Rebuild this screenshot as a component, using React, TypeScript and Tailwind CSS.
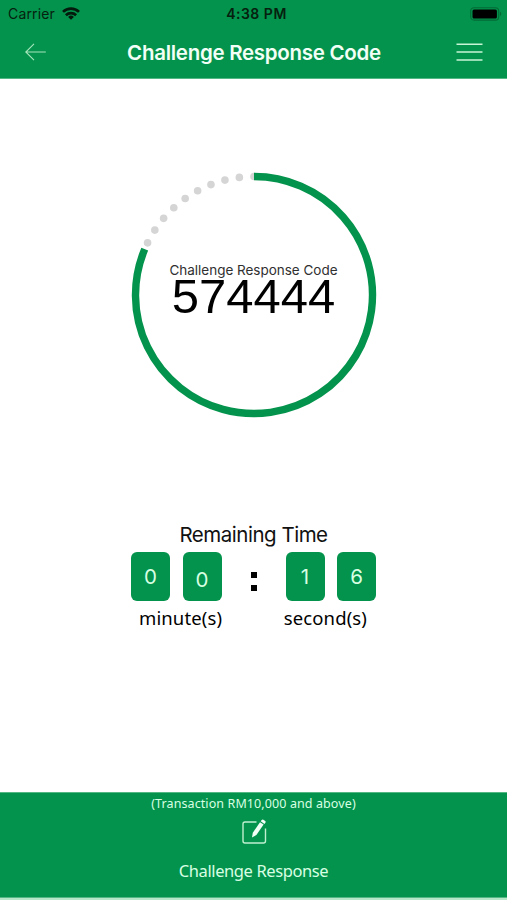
const RADIUS = 118.5;
const CENTER = 124;
const DOT_STEP = 7.1;
const PROGRESS = 292.8;

const pointAt = (deg: number) => {
  const rad = (deg * Math.PI) / 180;
  return { x: CENTER + RADIUS * Math.sin(rad), y: CENTER - RADIUS * Math.cos(rad) };
};

function StatusBar() {
  return (
    <div className="flex h-[27px] items-center justify-between pl-2 pr-[5px] text-[14px] text-[#06200f]">
      <div className="flex w-[120px] items-center gap-[7px]">
        <span className="w-[47px] whitespace-nowrap tracking-[0.15px]">Carrier</span>
        <svg width="18" height="13" viewBox="0 0 18 13" fill="none" stroke="#031a0c" strokeWidth="2.7">
          <path d="M1 4.9a11.4 11.4 0 0 1 16 0" />
          <path d="M3.900 8.200a7.300 7.300 0 0 1 10.200 0" />
          <path d="M6.1 10a4.200 4.200 0 0 1 5.800 0L9 12.800z" fill="#031a0c" stroke="none" />
        </svg>
      </div>
      <span className="whitespace-nowrap text-[14px] font-semibold tracking-[0.5px]">4:38 PM</span>
      <div className="flex w-[117px] justify-end">
        <svg width="32" height="14" viewBox="0 0 32 14">
          <rect x="0.7" y="0.7" width="28" height="12.4" rx="3.4" fill="none" stroke="#036b36" strokeWidth="1.1" />
          <rect x="2.5" y="2.4" width="24.4" height="9" rx="1.5" fill="#000" />
          <path d="M30 4.8c1.7.6 1.7 3.600 0 4.200z" fill="#036b36" />
        </svg>
      </div>
    </div>
  );
}

function Header() {
  return (
    <header className="h-[79px] border-b border-[#53b783] bg-[#04934c]">
      <StatusBar />
      <div className="flex h-[51px] items-center justify-between pl-[25px] pr-[24px]">
        <button aria-label="Back" className="w-[27px]">
          <svg className="-mt-[2px]" width="22" height="18" viewBox="0 0 22 18" fill="none" stroke="#a5e6bd" strokeWidth="1.1">
            <path d="M9 .8.8 9 9 17.200M.8 9h20" />
          </svg>
        </button>
        <h1 className="whitespace-nowrap pt-[2px] text-[20.5px] font-semibold tracking-[-0.28px] text-[#f2fff6]">Challenge Response Code</h1>
        <button aria-label="Menu">
          <svg className="-mt-[2px]" width="27" height="20" viewBox="0 0 27 20" stroke="#c8f5d6" strokeWidth="1.6">
            <path d="M.5 2.200h26M.5 10h26M.5 18h26" />
          </svg>
        </button>
      </div>
    </header>
  );
}

function CodeRing() {
  const end = pointAt(PROGRESS);
  const dots = Array.from({ length: 10 }, (_, i) => pointAt(-i * DOT_STEP));
  return (
    <div className="grid h-[248px] w-[248px] place-items-center">
      <svg className="col-start-1 row-start-1" width="248" height="248" viewBox="0 0 248 248">
        {dots.map((dot, i) => (
          <circle key={i} cx={dot.x} cy={dot.y} r="3.8" fill="#d5d5d5" />
        ))}
        <path
          d={`M${CENTER} ${CENTER - RADIUS}A${RADIUS} ${RADIUS} 0 1 1 ${end.x} ${end.y}`}
          fill="none"
          stroke="#04934c"
          strokeWidth="7.4"
        />
      </svg>
      <div className="col-start-1 row-start-1 flex flex-col items-center pb-[14px] whitespace-nowrap">
        <span className="text-[13.5px] leading-[16px] tracking-[-0.02px] text-[#303030]">Challenge Response Code</span>
        <span className="font-['Liberation_Sans',sans-serif] text-[49px] leading-[36px] text-black">574444</span>
      </div>
    </div>
  );
}

function Digit({ value, low }: { value: number; low?: boolean }) {
  return (
    <div className={`flex h-[49px] w-[39px] items-center justify-center rounded-[6px] bg-[#04934c] text-[20.5px] text-[#d8ffe3] ${low ? "pt-[7px]" : "pt-[2px]"}`}>
      {value}
    </div>
  );
}

function Countdown() {
  return (
    <section className="flex w-[245px] flex-col items-center">
      <h2 className="h-[31px] whitespace-nowrap text-[20.5px] leading-[27px] tracking-[-0.48px] text-[#111]">Remaining Time</h2>
      <div className="flex items-center justify-between self-stretch">
        <div className="flex gap-[12.5px]">
          <Digit value={0} />
          <Digit value={0} low />
        </div>
        <div className="flex flex-col gap-[7px] pt-[9px]">
          <span className="h-[6px] w-[6px] bg-black" />
          <span className="h-[6px] w-[6px] bg-black" />
        </div>
        <div className="flex gap-[12.5px]">
          <Digit value={1} />
          <Digit value={6} />
        </div>
      </div>
      <div className="flex justify-between self-stretch pt-[4px] pl-[8px] pr-[9px] font-['Noto_Sans',sans-serif] text-[18.5px] leading-[26px] tracking-[0.12px] text-black">
        <span>minute(s)</span>
        <span>second(s)</span>
      </div>
    </section>
  );
}

function Footer() {
  return (
    <footer className="flex h-[106px] flex-col items-center border-y border-[#53b783] bg-[#04934c] font-['Noto_Sans',sans-serif] text-[#d8ffe3]">
      <span className="pt-[2px] text-[12.5px] leading-[18px] tracking-[0.1px]">(Transaction RM10,000 and above)</span>
      <svg className="mt-[5px]" width="26" height="27" viewBox="0 0 26 27" fill="none">
        <path d="M15.500 4H4a2 2 0 0 0-2 2v17a2 2 0 0 0 2 2h18.500a2 2 0 0 0 2-2V10.500" stroke="#bff0cf" strokeWidth="1.4" />
        <path d="m11 19.500.8-4.800L19 4.200l3.600 2.400-7.200 10.300z" fill="#f2fff6" />
        <path d="m19.700 3.300 1-1.300a1.200 1.200 0 0 1 1.700-.2l1.800 1.200a1.200 1.200 0 0 1 .2 1.700l-1 1.300z" fill="#f2fff6" />
      </svg>
      <span className="mt-[14px] text-[16.5px] leading-[24px] tracking-[-0.4px]">Challenge Response</span>
    </footer>
  );
}

export default function App() {
  return (
    <div className="flex h-[900px] w-[507px] flex-col bg-white font-[Inter,sans-serif]">
      <Header />
      <main className="flex flex-1 flex-col items-center pt-[92px]">
        <CodeRing />
        <div className="h-[102px]" />
        <Countdown />
      </main>
      <Footer />
      <div className="h-[2px] bg-[#b5e7c8]" />
    </div>
  );
}
